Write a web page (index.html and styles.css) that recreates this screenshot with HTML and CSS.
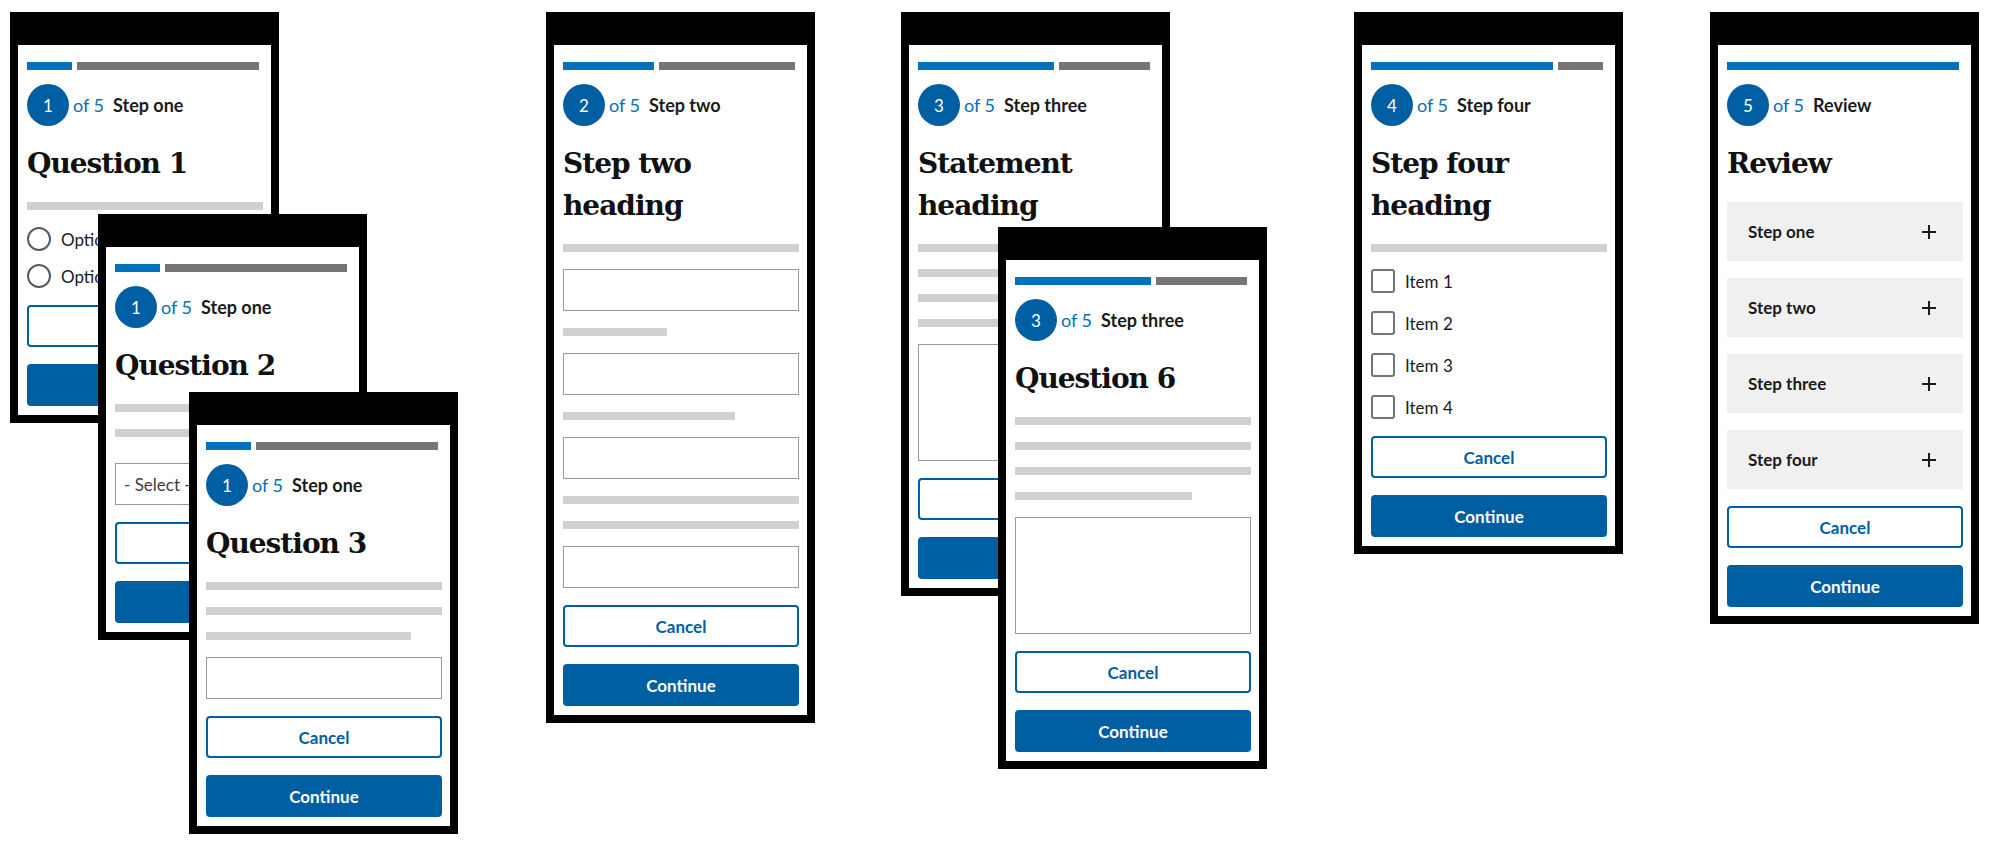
FILE: index.html
```html
<!DOCTYPE html>
<html lang="en">
<head>
    <meta charset="UTF-8">
    <meta name="viewport" content="width=device-width, initial-scale=1.0">
    <title>Form flow wireframes</title>
    <link rel="stylesheet" href="styles.css">
</head>
<body>
    <div class="canvas">

        <!-- Step one: question 1 -->
        <div class="phone phone-q1">
            <div class="progress s1"><span class="done"></span><span class="todo"></span></div>
            <div class="step"><span class="step-num">1</span><span class="step-of">of 5</span><span class="step-name">Step one</span></div>
            <h1>Question 1</h1>
            <div class="line"></div>
            <div class="choices radios">
                <label class="choice"><span class="radio"></span>Option 1</label>
                <label class="choice"><span class="radio"></span>Option 2</label>
            </div>
            <button class="btn btn-outline">Cancel</button>
            <button class="btn btn-primary">Continue</button>
        </div>

        <!-- Step one: question 2 -->
        <div class="phone phone-q2">
            <div class="progress s1"><span class="done"></span><span class="todo"></span></div>
            <div class="step"><span class="step-num">1</span><span class="step-of">of 5</span><span class="step-name">Step one</span></div>
            <h1>Question 2</h1>
            <div class="line"></div>
            <div class="line"></div>
            <div class="field select">- Select -<span class="caret"></span></div>
            <button class="btn btn-outline">Cancel</button>
            <button class="btn btn-primary">Continue</button>
        </div>

        <!-- Step one: question 3 -->
        <div class="phone phone-q3">
            <div class="progress s1"><span class="done"></span><span class="todo"></span></div>
            <div class="step"><span class="step-num">1</span><span class="step-of">of 5</span><span class="step-name">Step one</span></div>
            <h1>Question 3</h1>
            <div class="line"></div>
            <div class="line"></div>
            <div class="line w87"></div>
            <div class="field"></div>
            <button class="btn btn-outline">Cancel</button>
            <button class="btn btn-primary">Continue</button>
        </div>

        <!-- Step two -->
        <div class="phone phone-s2">
            <div class="progress s2"><span class="done"></span><span class="todo"></span></div>
            <div class="step"><span class="step-num">2</span><span class="step-of">of 5</span><span class="step-name">Step two</span></div>
            <h1>Step two heading</h1>
            <div class="line"></div>
            <div class="field"></div>
            <div class="line w44"></div>
            <div class="field"></div>
            <div class="line w73"></div>
            <div class="field"></div>
            <div class="line"></div>
            <div class="line"></div>
            <div class="field"></div>
            <button class="btn btn-outline">Cancel</button>
            <button class="btn btn-primary">Continue</button>
        </div>

        <!-- Step three: statement -->
        <div class="phone phone-s3">
            <div class="progress s3"><span class="done"></span><span class="todo"></span></div>
            <div class="step"><span class="step-num">3</span><span class="step-of">of 5</span><span class="step-name">Step three</span></div>
            <h1>Statement heading</h1>
            <div class="line"></div>
            <div class="line"></div>
            <div class="line"></div>
            <div class="line"></div>
            <div class="field textarea"></div>
            <button class="btn btn-outline">Cancel</button>
            <button class="btn btn-primary">Continue</button>
        </div>

        <!-- Step three: question 6 -->
        <div class="phone phone-q6">
            <div class="progress s3"><span class="done"></span><span class="todo"></span></div>
            <div class="step"><span class="step-num">3</span><span class="step-of">of 5</span><span class="step-name">Step three</span></div>
            <h1>Question 6</h1>
            <div class="line"></div>
            <div class="line"></div>
            <div class="line"></div>
            <div class="line w75"></div>
            <div class="field textarea"></div>
            <button class="btn btn-outline">Cancel</button>
            <button class="btn btn-primary">Continue</button>
        </div>

        <!-- Step four -->
        <div class="phone phone-s4">
            <div class="progress s4"><span class="done"></span><span class="todo"></span></div>
            <div class="step"><span class="step-num">4</span><span class="step-of">of 5</span><span class="step-name">Step four</span></div>
            <h1>Step four heading</h1>
            <div class="line"></div>
            <div class="choices checks">
                <label class="choice"><span class="checkbox"></span>Item 1</label>
                <label class="choice"><span class="checkbox"></span>Item 2</label>
                <label class="choice"><span class="checkbox"></span>Item 3</label>
                <label class="choice"><span class="checkbox"></span>Item 4</label>
            </div>
            <button class="btn btn-outline">Cancel</button>
            <button class="btn btn-primary">Continue</button>
        </div>

        <!-- Review -->
        <div class="phone phone-review">
            <div class="progress s5"><span class="done"></span></div>
            <div class="step"><span class="step-num">5</span><span class="step-of">of 5</span><span class="step-name">Review</span></div>
            <h1>Review</h1>
            <div class="accordion">Step one<svg class="plus" viewBox="0 0 16 16"><path d="M8 1v14M1 8h14"/></svg></div>
            <div class="accordion">Step two<svg class="plus" viewBox="0 0 16 16"><path d="M8 1v14M1 8h14"/></svg></div>
            <div class="accordion">Step three<svg class="plus" viewBox="0 0 16 16"><path d="M8 1v14M1 8h14"/></svg></div>
            <div class="accordion">Step four<svg class="plus" viewBox="0 0 16 16"><path d="M8 1v14M1 8h14"/></svg></div>
            <button class="btn btn-outline">Cancel</button>
            <button class="btn btn-primary">Continue</button>
        </div>

    </div>
</body>
</html>
```

FILE: styles.css
```css
body {
    margin: 0;
    background-color: #fff;
    color: #1b1b1b;
    font-family: Lato, "Open Sans", sans-serif;
}

.canvas {
    position: relative;
    width: 1999px;
    height: 850px;
    overflow: hidden;
}

/* phone frame */
.phone {
    position: absolute;
    width: 269px;
    box-sizing: border-box;
    border: 8px solid #000;
    border-top-width: 33px;
    background-color: #fff;
    padding: 17px 8px 9px 9px;
    display: flex;
    flex-direction: column;
    gap: 17px;
}

.phone-q1 { left: 10px; top: 12px; }
.phone-q2 { left: 98px; top: 214px; }
.phone-q3 { left: 189px; top: 392px; }
.phone-s2 { left: 546px; top: 12px; }
.phone-s3 { left: 901px; top: 12px; }
.phone-q6 { left: 998px; top: 227px; }
.phone-s4 { left: 1354px; top: 12px; }
.phone-review { left: 1710px; top: 12px; }

/* progress bar */
.progress {
    display: flex;
    gap: 5px;
    height: 8px;
    margin-right: 4px;
}

.progress span {
    display: block;
    height: 8px;
}

.progress .done { background-color: #0071bc; }
.progress .todo { background-color: #757575; }

.s1 .done { flex: 1; } .s1 .todo { flex: 4; }
.s2 .done { flex: 2; } .s2 .todo { flex: 3; }
.s3 .done { flex: 3; } .s3 .todo { flex: 2; }
.s4 .done { flex: 4; } .s4 .todo { flex: 1; }
.s5 .done { flex: 1; }

/* step indicator */
.step {
    display: flex;
    align-items: center;
    margin-top: -3px;
    font-size: 18px;
}

.step-num {
    width: 42px;
    height: 42px;
    border-radius: 50%;
    background-color: #005ea2;
    color: #fff;
    display: flex;
    align-items: center;
    justify-content: center;
    font-size: 17px;
    margin-right: 4px;
}

.step-of {
    color: #0071bc;
    margin-right: 9px;
}

.step-name {
    font-weight: 700;
}

h1 {
    margin: 0;
    font-family: "DejaVu Serif", serif;
    font-weight: 700;
    font-size: 28px;
    line-height: 42px;
    letter-spacing: -1px;
    color: #111;
}

.phone-s2 h1,
.phone-s3 h1,
.phone-s4 h1 {
    padding-right: 60px;
}

/* placeholder text lines */
.line {
    height: 8px;
    background-color: #d0d0d0;
}

.w44 { width: 44%; }
.w73 { width: 73%; }
.w75 { width: 75%; }
.w87 { width: 87%; }

/* form fields */
.field {
    height: 42px;
    box-sizing: border-box;
    border: 1px solid #9a9a9a;
}

.textarea {
    height: 117px;
}

.select {
    display: flex;
    align-items: center;
    justify-content: space-between;
    padding: 0 12px 0 8px;
    margin-top: 9px;
    font-size: 17px;
    color: #3d3d3d;
}

.caret {
    width: 0;
    height: 0;
    border-left: 5px solid transparent;
    border-right: 5px solid transparent;
    border-top: 6px solid #1b1b1b;
}

.choices {
    display: flex;
    flex-direction: column;
}

.radios { gap: 13px; }
.checks { gap: 18px; }

.choice {
    display: flex;
    align-items: center;
    height: 24px;
    font-size: 17px;
    color: #1b1b1b;
    white-space: nowrap;
}

.radio {
    width: 24px;
    height: 24px;
    box-sizing: border-box;
    border: 2px solid #565c65;
    border-radius: 50%;
    margin-right: 10px;
}

.checkbox {
    width: 24px;
    height: 24px;
    box-sizing: border-box;
    border: 2px solid #71767a;
    border-radius: 3px;
    margin-right: 10px;
}

/* review accordions */
.accordion {
    height: 59px;
    background-color: #f0f0f0;
    display: flex;
    align-items: center;
    justify-content: space-between;
    padding: 0 26px 0 21px;
    font-size: 17px;
    font-weight: 700;
}

.plus {
    width: 16px;
    height: 16px;
    fill: none;
    stroke: #1b1b1b;
    stroke-width: 2;
}

/* buttons */
.btn {
    height: 42px;
    box-sizing: border-box;
    border-radius: 4px;
    font-family: Lato, "Open Sans", sans-serif;
    font-size: 17px;
    font-weight: 700;
    cursor: pointer;
}

.btn-outline {
    background-color: #fff;
    border: 2px solid #005ea2;
    color: #005ea2;
}

.btn-primary {
    background-color: #005ea2;
    border: none;
    color: #fff;
}
```
